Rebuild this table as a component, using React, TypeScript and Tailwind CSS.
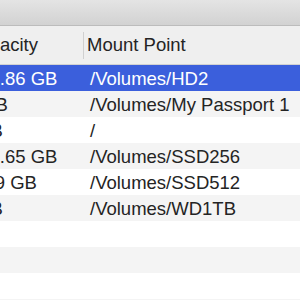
import React from "react";

type Row = { cap: string; mount: string };

const rows: Row[] = [
  { cap: "931.86 GB", mount: "/Volumes/HD2" },
  { cap: "2 TB", mount: "/Volumes/My Passport 1" },
  { cap: "2TB", mount: "/" },
  { cap: "239.65 GB", mount: "/Volumes/SSD256" },
  { cap: "51.9 GB", mount: "/Volumes/SSD512" },
  { cap: "1TB", mount: "/Volumes/WD1TB" },
  { cap: "", mount: "" },
  { cap: "", mount: "" },
  { cap: "", mount: "" },
  { cap: "", mount: "" },
];

export default function App() {
  return (
    <div className="w-[300px] h-[300px] overflow-hidden bg-white font-['Liberation_Sans',Arial,sans-serif] text-[18.5px] text-[#242424]">
      <div className="h-[26px] bg-gradient-to-b from-[#e4e4e4] to-[#d2d2d2] border-b border-[#bcbcbc]" />
      <div className="h-[39px] bg-[#efefef] border-b border-[#d2d2d2] flex items-center ml-[-36px] w-[500px]">
        <div className="w-[119px] pl-[2px] shrink-0">Capacity</div>
        <div className="flex items-center">
          <div className="w-px h-[27px] bg-[#d0d0d0]" />
          <div className="pl-[3px]">Mount Point</div>
        </div>
      </div>
      {rows.map((r, i) => {
        const selected = i === 0;
        const bg = selected ? "bg-[#3b5fdc] text-white" : i % 2 === 1 ? "bg-[#f4f4f4]" : "bg-white";
        return (
          <div key={i} className={`h-[26px] flex items-center pt-[2px] ml-[-36px] w-[500px] whitespace-nowrap ${bg}`}>
            <div className="w-[120px] pl-[5px] shrink-0">{r.cap}</div>
            <div className="pl-[6px]">{r.mount}</div>
          </div>
        );
      })}
    </div>
  );
}
